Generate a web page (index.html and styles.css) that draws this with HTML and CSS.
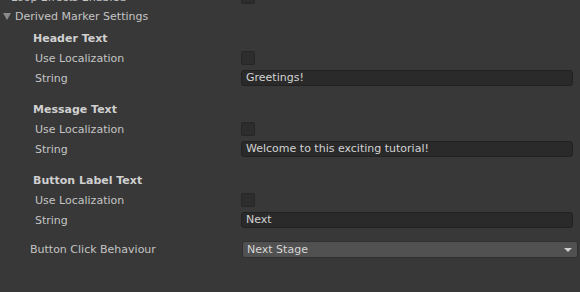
FILE: index.html
```html
<!DOCTYPE html>
<html lang="en">
<head>
  <meta charset="UTF-8" />
  <title>Derived Marker Settings</title>
  <link rel="stylesheet" href="styles.css">
</head>
<body>
  <div class="inspector">
    <div class="row row-top">
      <span class="label label-top">Loop Effects Enabled</span>
      <span class="field"><span class="checkbox"></span></span>
    </div>

    <div class="row foldout">
      <span class="arrow"></span>
      <span class="label">Derived Marker Settings</span>
    </div>

    <div class="group">
      <div class="row"><span class="label heading">Header Text</span></div>
      <div class="row">
        <span class="label sub">Use Localization</span>
        <span class="field"><span class="checkbox"></span></span>
      </div>
      <div class="row">
        <span class="label sub">String</span>
        <span class="field"><span class="textbox">Greetings!</span></span>
      </div>
    </div>

    <div class="group">
      <div class="row"><span class="label heading">Message Text</span></div>
      <div class="row">
        <span class="label sub">Use Localization</span>
        <span class="field"><span class="checkbox"></span></span>
      </div>
      <div class="row">
        <span class="label sub">String</span>
        <span class="field"><span class="textbox">Welcome to this exciting tutorial!</span></span>
      </div>
    </div>

    <div class="group group-last">
      <div class="row"><span class="label heading">Button Label Text</span></div>
      <div class="row">
        <span class="label sub">Use Localization</span>
        <span class="field"><span class="checkbox"></span></span>
      </div>
      <div class="row">
        <span class="label sub">String</span>
        <span class="field"><span class="textbox">Next</span></span>
      </div>
    </div>

    <div class="row row-popup">
      <span class="label popup-label">Button Click Behaviour</span>
      <span class="field field-wide">
        <span class="popup">Next Stage<span class="popup-arrow"></span></span>
      </span>
    </div>
  </div>
</body>
</html>
```

FILE: styles.css
```css
body {
  margin: 0;
  background-color: #383838;
  font-family: "DejaVu Sans", Verdana, sans-serif;
  font-size: 11px;
  color: #c4c4c4;
  overflow: hidden;
}
.inspector {
  width: 580px;
  height: 292px;
  margin-top: -12px;
}
.row {
  display: flex;
  align-items: center;
  height: 20px;
}
.row-top {
  height: 18px;
}
.label {
  width: 241px;
  flex: none;
  white-space: nowrap;
}
.label-top {
  padding-left: 11px;
  width: 230px;
}
.foldout {
  margin-bottom: 2px;
}
.arrow {
  width: 0;
  height: 0;
  margin-left: 3px;
  margin-right: 4px;
  border-left: 4px solid transparent;
  border-right: 4px solid transparent;
  border-top: 7px solid #8a8a8a;
}
.foldout .label {
  width: auto;
}
.heading {
  padding-left: 33px;
  font-weight: bold;
  color: #d0d0d0;
}
.sub {
  padding-left: 35px;
  width: 206px;
}
.group {
  margin-bottom: 11px;
}
.group-last {
  margin-bottom: 9px;
}
.field {
  flex: 1;
  display: flex;
  align-items: center;
  padding-right: 7px;
}
.checkbox {
  width: 12px;
  height: 12px;
  border: 1px solid #262626;
  border-radius: 2px;
  background: #2d2d2d;
}
.textbox {
  flex: 1;
  height: 14px;
  line-height: 14px;
  padding: 0 4px;
  border: 1px solid #212121;
  border-radius: 3px;
  background: #2a2a2a;
  color: #d2d2d2;
}
.popup-label {
  padding-left: 30px;
  width: 212px;
}
.field-wide {
  padding-right: 2px;
}
.popup {
  flex: 1;
  position: relative;
  height: 15px;
  line-height: 15px;
  padding: 0 4px;
  border: 1px solid #303030;
  border-radius: 3px;
  background: #515151;
  color: #d6d6d6;
}
.popup-arrow {
  position: absolute;
  right: 5px;
  top: 6px;
  width: 0;
  height: 0;
  border-left: 4px solid transparent;
  border-right: 4px solid transparent;
  border-top: 4px solid #cfcfcf;
}
```
